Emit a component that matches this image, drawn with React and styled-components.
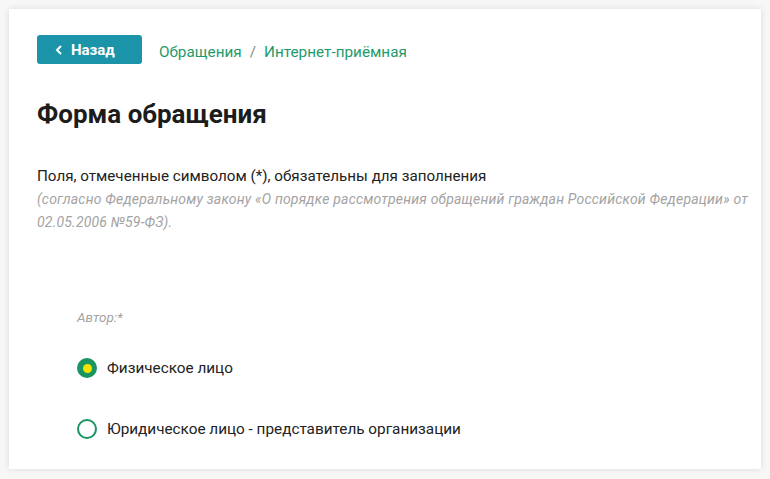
import React from 'react';
import styled, { createGlobalStyle } from 'styled-components';

const GlobalStyle = createGlobalStyle`
    html, body {
        margin: 0;
        padding: 0;
        background: #f7f7f7;
        font-family: Roboto, "Noto Sans", sans-serif;
        color: #222;
    }
`;

const Page = styled.div`
    padding: 9px;
`;

const Card = styled.div`
    background: #fff;
    height: 460px;
    box-sizing: border-box;
    padding: 26px 8px 26px 28px;
    box-shadow: 0 0 6px rgba(0, 0, 0, 0.12);
`;

const TopBar = styled.div`
    display: flex;
    align-items: center;
    gap: 17px;
`;

const BackButton = styled.button`
    display: flex;
    align-items: center;
    gap: 8px;
    width: 105px;
    height: 29px;
    padding: 0 0 0 18px;
    border: none;
    border-radius: 3px;
    background: #1b93a8;
    color: #fff;
    font: 700 15px Roboto, sans-serif;
    cursor: pointer;
`;

const Crumbs = styled.nav`
    display: flex;
    gap: 8px;
    font-size: 15.3px;
    color: #1f9a6a;
    padding-top: 4px;

    span.sep {
        color: #888;
    }
`;

const Title = styled.h1`
    margin: 34px 0 0;
    font-size: 26px;
    font-weight: 700;
    color: #1c1c1c;
    line-height: 32px;
`;

const Note = styled.p`
    margin: 36px 0 0;
    font-size: 15.2px;
    line-height: 20px;
`;

const Law = styled.p`
    margin: 2px 0 0;
    font-size: 14px;
    letter-spacing: 0.2px;
    font-style: italic;
    line-height: 23px;
    color: #a3a3a3;
`;

const Fieldset = styled.div`
    margin-top: 75px;
    padding-left: 40px;
`;

const Legend = styled.div`
    font-size: 13.5px;
    font-style: italic;
    color: #a3a3a3;
`;

const Options = styled.div`
    display: flex;
    flex-direction: column;
    gap: 41px;
    margin-top: 33px;
`;

const Option = styled.label`
    display: flex;
    align-items: center;
    gap: 10px;
    font-size: 15.3px;
    color: #222;
`;

const Dot = styled.span`
    width: 20px;
    height: 20px;
    box-sizing: border-box;
    border-radius: 50%;
    border: 2px solid #1a9460;
    background: ${p => (p.checked ? '#1a9460' : '#fff')};
    display: flex;
    align-items: center;
    justify-content: center;

    &::after {
        content: '';
        display: ${p => (p.checked ? 'block' : 'none')};
        width: 9px;
        height: 9px;
        border-radius: 50%;
        background: #f4e200;
    }
`;

const Chevron = () => (
    <svg width="8" height="10" viewBox="0 0 8 10">
        <path d="M6 1 L2 5 L6 9" stroke="#fff" strokeWidth="2" fill="none" />
    </svg>
);

function App() {
    return (
        <Page>
            <GlobalStyle />
            <Card>
                <TopBar>
                    <BackButton><Chevron />Назад</BackButton>
                    <Crumbs>
                        <span>Обращения</span>
                        <span className="sep">/</span>
                        <span>Интернет-приёмная</span>
                    </Crumbs>
                </TopBar>

                <Title>Форма обращения</Title>

                <Note>Поля, отмеченные символом (*), обязательны для заполнения</Note>
                <Law>
                    (согласно Федеральному закону «О порядке рассмотрения обращений граждан Российской Федерации» от 02.05.2006 №59-ФЗ).
                </Law>

                <Fieldset>
                    <Legend>Автор:*</Legend>
                    <Options>
                        <Option><Dot checked />Физическое лицо</Option>
                        <Option><Dot />Юридическое лицо - представитель организации</Option>
                    </Options>
                </Fieldset>
            </Card>
        </Page>
    );
}

export default App;
